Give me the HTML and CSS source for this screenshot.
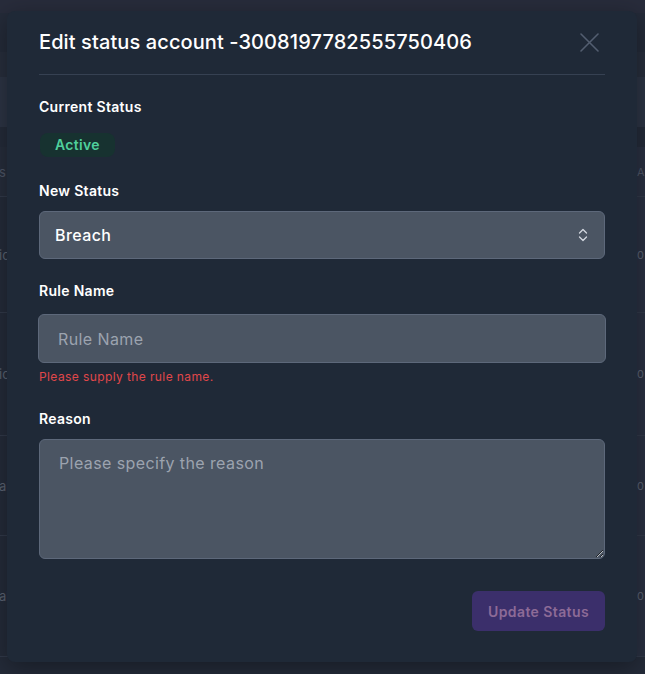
FILE: index.html
```html
<!DOCTYPE html>
<html lang="en">
<head>
<meta charset="utf-8">
<title>Edit status account</title>
<link rel="stylesheet" href="styles.css">
</head>
<body>
<div class="page">
  <div class="topbar"></div>
  <div class="main">
    <div class="toolbar"></div>
    <div class="search"></div>
    <div class="table">
      <div class="row head"><span class="c1">s</span><span class="c2">A</span></div>
      <div class="row r1"><span class="c1">ic</span><span class="c2">0</span></div>
      <div class="row r2"><span class="c1">ic</span><span class="c2">0</span></div>
      <div class="row r3"><span class="c1">al</span><span class="c2">0</span></div>
      <div class="row r4"><span class="c1">al</span><span class="c2">0</span></div>
    </div>
  </div>
</div>

<div class="modal" role="dialog" aria-labelledby="modal-title">
  <div class="modal-header">
    <h2 class="modal-title" id="modal-title">Edit status account -3008197782555750406</h2>
    <button class="close" type="button" aria-label="Close">
      <svg width="19" height="19" viewBox="0 0 19 19" fill="none" stroke="currentColor" stroke-width="1.6" stroke-linecap="round">
        <path d="M1 1 L18 18 M18 1 L1 18"/>
      </svg>
    </button>
  </div>
  <div class="modal-body">
    <div class="label first">Current Status</div>
    <div class="badge-row"><span class="badge">Active</span></div>

    <label class="label gap-lg" for="new-status">New Status</label>
    <div class="select-wrap">
      <select id="new-status" class="control select">
        <option>Breach</option>
        <option>Active</option>
      </select>
      <svg class="chev" width="10" height="16" viewBox="0 0 10 16" fill="none" stroke="currentColor" stroke-width="1.3" stroke-linecap="round" stroke-linejoin="round">
        <path d="M1.5 6 L5 2.5 L8.5 6 M1.5 10 L5 13.5 L8.5 10"/>
      </svg>
    </div>

    <label class="label gap-md" for="rule-name">Rule Name</label>
    <input id="rule-name" class="control input" type="text" placeholder="Rule Name">
    <div class="error">Please supply the rule name.</div>

    <label class="label gap-lg" for="reason">Reason</label>
    <textarea id="reason" class="control textarea" placeholder="Please specify the reason"></textarea>
  </div>
  <div class="modal-footer">
    <button class="btn" type="button" disabled>Update Status</button>
  </div>
</div>
</body>
</html>
```

FILE: styles.css
```css
* { box-sizing: border-box; }

html, body {
  margin: 0;
  padding: 0;
  width: 645px;
  height: 674px;
  overflow: hidden;
  background: #272b3a;
  font-family: "Inter", "Noto Sans", sans-serif;
}

/* ---------- background page ---------- */
.page {
  display: flex;
  flex-direction: column;
  height: 674px;
}
.topbar {
  height: 13px;
  background: #282c3b;
}
.main {
  flex: 1;
  background: #242b39;
  display: flex;
  flex-direction: column;
}
.toolbar {
  margin-top: 39px;
  height: 25px;
  background: #272e3c;
}
.search {
  height: 50px;
  background: #2c3444;
}
.table {
  margin-top: 20px;
  display: flex;
  flex-direction: column;
}
.row {
  display: flex;
  justify-content: space-between;
  align-items: center;
  border-bottom: 1px solid #313949;
  font-size: 13px;
  color: #5a6271;
}
.row .c1 { margin-left: -1px; }
.row .c2 {
  width: 8px;
  align-self: stretch;
  display: flex;
  align-items: center;
  padding: 0;
  font-size: 11px;
  background: #293041;
}
.head { height: 50px; background: #262d3b; color: #4e5666; }
.r1 { height: 116px; }
.r2 { height: 123px; }
.r3 { height: 100px; }
.r4 { height: 121px; }

/* ---------- modal ---------- */
.modal {
  position: absolute;
  left: 7px;
  top: 11px;
  width: 630px;
  padding: 16px 32px 31px;
  background: #1f2937;
  border-radius: 8px;
  box-shadow: 0 6px 24px rgba(0, 0, 0, 0.35);
  display: flex;
  flex-direction: column;
  color: #ffffff;
}
.modal-header {
  display: flex;
  align-items: center;
  justify-content: space-between;
  padding-bottom: 17px;
  border-bottom: 1px solid #364152;
}
.modal-title {
  margin: 0;
  font-size: 20px;
  line-height: 30px;
  font-weight: 500;
  color: #ffffff;
  letter-spacing: 0.1px;
}
.close {
  width: 32px;
  height: 30px;
  padding: 0;
  border: 0;
  background: transparent;
  color: #535e70;
  display: flex;
  align-items: center;
  justify-content: center;
  cursor: pointer;
}

.modal-body {
  display: flex;
  flex-direction: column;
}
.label {
  display: block;
  font-size: 14px;
  line-height: 20px;
  font-weight: 600;
  letter-spacing: 0.3px;
  color: #ffffff;
  margin-bottom: 10px;
}
.label.first { margin-top: 22px; margin-bottom: 16px; }
.label.gap-lg { margin-top: 24px; }
.label.gap-md { margin-top: 22px; margin-bottom: 13px; }

.badge-row { display: flex; }
.badge {
  height: 24px;
  padding: 0 15px;
  margin-left: 1px;
  border-radius: 8px;
  background: #173230;
  color: #4fcf9c;
  font-size: 14px;
  font-weight: 600;
  letter-spacing: 0.3px;
  line-height: 24px;
}

.control {
  width: 100%;
  font-family: inherit;
  background: #4b5563;
  border: 1px solid #5d687a;
  border-radius: 6px;
  color: #ffffff;
  outline: none;
  letter-spacing: 0.4px;
}
.control::placeholder { color: #9ca3af; opacity: 1; }

.select-wrap { position: relative; }
.select {
  appearance: none;
  -webkit-appearance: none;
  height: 48px;
  padding: 0 40px 0 15px;
  font-size: 16px;
  font-weight: 500;
}
.chev {
  position: absolute;
  right: 17px;
  top: 16px;
  color: #d3d8e0;
  pointer-events: none;
}

.input {
  height: 49px;
  margin: 0 -1px;
  width: calc(100% + 2px);
  padding: 0 19px;
  font-size: 16px;
}
.error {
  margin-top: 6px;
  font-size: 12px;
  line-height: 16px;
  letter-spacing: 0.4px;
  color: #e0474a;
}
.textarea {
  display: block;
  height: 120px;
  padding: 12px 19px;
  font-size: 16px;
  line-height: 22px;
  resize: vertical;
}

.modal-footer {
  display: flex;
  justify-content: flex-end;
  margin-top: 32px;
}
.btn {
  height: 40px;
  padding: 0 16px;
  border: 0;
  border-radius: 6px;
  background: #3b2f6b;
  color: #8d6b97;
  font-family: inherit;
  font-size: 14px;
  font-weight: 600;
  letter-spacing: 0.4px;
}
```
